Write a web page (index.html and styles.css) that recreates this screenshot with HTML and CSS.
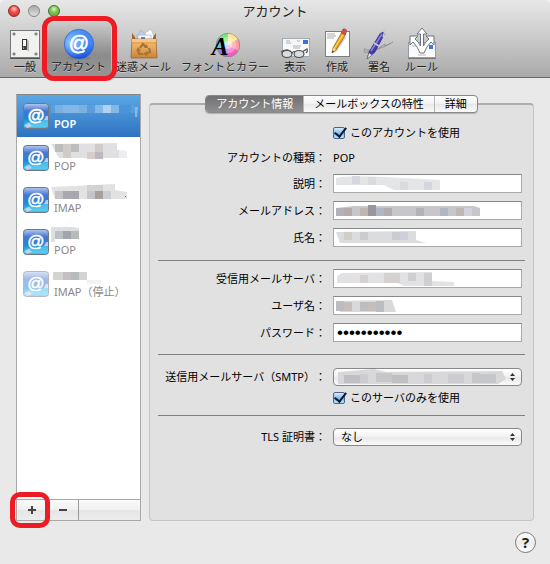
FILE: index.html
```html
<!DOCTYPE html>
<html lang="ja">
<head>
    <meta charset="UTF-8">
    <meta name="viewport" content="width=device-width, initial-scale=1.0">
    <title>アカウント</title>
    <link rel="stylesheet" href="styles.css">
</head>
<body>
    <!-- Shared shapes -->
    <svg class="defs" width="0" height="0" aria-hidden="true">
        <defs>
            <linearGradient id="blueBall" x1="0" y1="0" x2="0" y2="1">
                <stop offset="0" stop-color="#4a8bee"/>
                <stop offset="0.5" stop-color="#3f86f8"/>
                <stop offset="1" stop-color="#1b4fd8"/>
            </linearGradient>
            <radialGradient id="ballLight" cx="0.25" cy="0.45" r="0.6">
                <stop offset="0" stop-color="#9fd2ff"/>
                <stop offset="1" stop-color="#5da4ff" stop-opacity="0"/>
            </radialGradient>
            <linearGradient id="mailTile" x1="0" y1="0" x2="0" y2="1">
                <stop offset="0" stop-color="#b4caf0"/>
                <stop offset="0.3" stop-color="#4577d0"/>
                <stop offset="0.6" stop-color="#2386d4"/>
                <stop offset="1" stop-color="#3ccbf0"/>
            </linearGradient>
            <linearGradient id="bag" x1="0" y1="0" x2="0" y2="1">
                <stop offset="0" stop-color="#d58b3c"/>
                <stop offset="0.3" stop-color="#eeb469"/>
                <stop offset="1" stop-color="#c98237"/>
            </linearGradient>
            <linearGradient id="paper" x1="0" y1="0" x2="0" y2="1">
                <stop offset="0" stop-color="#f2f4f6"/>
                <stop offset="1" stop-color="#ffffff"/>
            </linearGradient>
            <symbol id="mail" viewBox="0 0 26 26">
                <rect x="0.5" y="0.5" width="25" height="25" rx="3" fill="url(#mailTile)" stroke="#6f7780"/>
                <path d="M1 22 Q7 16 12 21 Q18 19 25 14 V24 H1Z" fill="#6fdcf5" opacity="0.5"/>
                <path d="M21 17 L23 13 L25 13 L25 17Z M2 22 L6 20 L9 23 L4 25Z" fill="#dcd3f2" opacity="0.8"/>
                <text x="13" y="18" text-anchor="middle" font-family="Liberation Sans, sans-serif" font-size="17" fill="#fff" stroke="#fff" stroke-width="0.5">@</text>
            </symbol>
            <symbol id="arrows" viewBox="0 0 5 8">
                <path d="M0 3 L2.5 0 L5 3Z M0 5 L2.5 8 L5 5Z" fill="#333"/>
            </symbol>
        </defs>
    </svg>

    <div class="window">
        <header class="header">
            <div class="titlebar">
                <div class="lights">
                    <button class="light red" aria-label="閉じる"></button>
                    <button class="light gray" aria-label="しまう"></button>
                    <button class="light green" aria-label="拡大"></button>
                </div>
                <h1>アカウント</h1>
            </div>
            <nav class="toolbar">
                <button class="tool">
                    <svg viewBox="0 0 32 32">
                        <rect x="1.5" y="2.5" width="29" height="27" fill="#f1f1ef" stroke="#777"/>
                        <path d="M1 30.5H31" stroke="#555"/>
                        <g fill="#9a9a9a" stroke="#666" stroke-width="0.5"><circle cx="5" cy="6" r="1.3"/><circle cx="27" cy="6" r="1.3"/><circle cx="5" cy="26" r="1.3"/><circle cx="27" cy="26" r="1.3"/></g>
                        <path d="M17 21 L20 24 L20 13 L18 11Z" fill="#bbb"/>
                        <rect x="13.5" y="11.5" width="4" height="10" fill="#ddd" stroke="#333"/>
                        <path d="M14 12H17V18H14Z" fill="#fff"/>
                        <path d="M14 18H18V22H15Z" fill="#444"/>
                    </svg>
                    <span>一般</span>
                </button>
                <button class="tool selected">
                    <svg viewBox="0 0 32 32">
                        <ellipse cx="16" cy="30" rx="12" ry="2" fill="#777" opacity="0.5"/>
                        <circle cx="16" cy="16" r="14.7" fill="url(#blueBall)" stroke="#2b5cc4" stroke-width="0.6"/>
                        <circle cx="16" cy="16" r="14" fill="url(#ballLight)"/>
                        <text x="16" y="22" text-anchor="middle" font-family="Liberation Sans, sans-serif" font-size="20" fill="#fff" stroke="#fff" stroke-width="0.6">@</text>
                    </svg>
                    <span>アカウント</span>
                    <i class="marker" aria-hidden="true"></i>
                </button>
                <button class="tool">
                    <svg viewBox="0 0 32 32">
                        <path d="M7 11 L13 2 L21 10Z" fill="#bccff0" stroke="#8fa5cc" stroke-width="0.5"/>
                        <path d="M17 5 L23 1 L27 11 L18 12Z" fill="#fff" stroke="#aaa" stroke-width="0.6"/>
                        <rect x="10" y="7" width="13" height="8" fill="#f5f7fb" stroke="#9aa" stroke-width="0.6"/>
                        <rect x="13" y="9" width="4" height="3" fill="#6687c8"/>
                        <path d="M4 5 L7 9 V12 H4Z M28 5 L25 9 V12 H28Z" fill="#a86724"/>
                        <path d="M4 11 H28 L29 30 H3Z" fill="url(#bag)" stroke="#996024" stroke-width="0.7"/>
                        <path d="M4 11 H28 V14 H4Z" fill="#f4c681"/>
                        <g fill="none" stroke="#a77434" stroke-width="2.2"><path d="M12 20 L15 16 L18 19"/><path d="M21 20 L22 24 L18 26"/><path d="M15 26 H11 L10 22"/></g>
                        <path d="M16 20 L20 20 L19 16Z M19 23 V28 L15 26Z M8 23 L10 19 L13 23Z" fill="#a77434"/>
                    </svg>
                    <span>迷惑メール</span>
                </button>
                <button class="tool">
                    <svg viewBox="0 0 32 32">
                        <path d="M19 17 L19 5 A12 12 0 0 1 29.4 11Z" fill="#fbe79a"/>
                        <path d="M19 17 L29.4 11 A12 12 0 0 1 29.4 23Z" fill="#ff9ea0"/>
                        <path d="M19 17 L29.4 23 A12 12 0 0 1 19 29Z" fill="#f45fc4"/>
                        <path d="M19 17 L19 29 A12 12 0 0 1 8.6 23Z" fill="#9277f4"/>
                        <path d="M19 17 L8.6 23 A12 12 0 0 1 8.6 11Z" fill="#55c3ee"/>
                        <path d="M19 17 L8.6 11 A12 12 0 0 1 19 5Z" fill="#75e87d"/>
                        <circle cx="19" cy="17" r="8" fill="#fff" opacity="0.3"/>
                        <circle cx="19" cy="17" r="4" fill="#fff" opacity="0.5"/>
                        <circle cx="19" cy="17" r="11.7" fill="none" stroke="#777" stroke-width="0.6"/>
                        <text x="11" y="27" text-anchor="middle" font-family="Liberation Serif, serif" font-style="italic" font-weight="bold" font-size="25" fill="#000">A</text>
                    </svg>
                    <span>フォントとカラー</span>
                </button>
                <button class="tool">
                    <svg viewBox="0 0 32 32">
                        <rect x="3.5" y="10.5" width="27" height="18" fill="url(#paper)" stroke="#a4acb2"/>
                        <rect x="24" y="12" width="5" height="4" fill="#3a6fe0"/>
                        <path d="M7 13H11 M7 15H12 M18 13H21 M14 18H22 M14 20H21" stroke="#b0b0b0"/>
                        <path d="M2 24 Q9 19 13 25 Q15 22 17 25 M23 24 L28 21 Q29 24 27 25" fill="none" stroke="#555" stroke-width="1.2"/>
                        <g fill="#d9dddf" stroke="#4c4c4c" stroke-width="1.2"><ellipse cx="8" cy="26" rx="5" ry="3.5"/><ellipse cx="20" cy="26" rx="5" ry="3.5"/></g>
                    </svg>
                    <span>表示</span>
                </button>
                <button class="tool">
                    <svg viewBox="0 0 32 32">
                        <rect x="4.5" y="3.5" width="24" height="25" fill="#fff" stroke="#7d7d7d"/>
                        <path d="M6 6H14 M6 8H15 M6 10H13" stroke="#aaa"/>
                        <path d="M11 25 L15 24 L26 8 L23 10Z" fill="#999" opacity="0.5"/>
                        <path d="M11 25 L12 20 L21 4 L25 6 L15 22Z" fill="#f5ad1e" stroke="#815615" stroke-width="0.7"/>
                        <path d="M13 21 L23 5" stroke="#ffda6b"/>
                        <path d="M20 5 L22 1 Q25 0 26 3 L24 7Z" fill="#d84a43" stroke="#8d5556" stroke-width="0.6"/>
                        <path d="M11 25 L12 20 L15 22Z" fill="#ead4ad"/><path d="M11 25 L11.5 22.5 L13 23.5Z" fill="#222"/>
                    </svg>
                    <span>作成</span>
                </button>
                <button class="tool">
                    <svg viewBox="0 0 32 32">
                        <path d="M2 20 Q-1 26 5 24 Q16 18 12 19 Q6 22 10 24 L22 16 Q20 20 30 14 M2 22 Q16 23 28 15" fill="none" stroke="#888" stroke-width="0.8"/>
                        <path d="M4 31 L6 24 L18 4 L22 5 L12 24Z" fill="#403bb0" stroke="#252567" stroke-width="0.6"/>
                        <path d="M8 23 L19 6" stroke="#8a87e8" stroke-width="1.5"/>
                        <path d="M11 15 L16 18 M17 5 L20 2 L22 3 L20 9" fill="none" stroke="#c9c9d4" stroke-width="1.5"/>
                        <path d="M4 31 L6 25 L9 27Z" fill="#e5e5ea" stroke="#666" stroke-width="0.5"/>
                    </svg>
                    <span>署名</span>
                </button>
                <button class="tool">
                    <svg viewBox="0 0 32 32">
                        <rect x="2.5" y="14.5" width="27" height="15" fill="url(#paper)" stroke="#8f9ba5"/>
                        <path d="M2 30.5H30" stroke="#777"/>
                        <rect x="23" y="17" width="4" height="4" fill="#3a78ec"/>
                        <path d="M6 18H10 M12 27H20" stroke="#bbb"/>
                        <path d="M14 25 Q12 19 7 14 L4 17 V8 H12 L9 11 Q13 14 14.500 18 V6 H11 L16 0 L21 6 H17.500 V18 Q19 14 23 11 L20 8 H28 V17 L25 14 Q20 19 18 25Z" fill="#fff" stroke="#69757e"/>
                    </svg>
                    <span>ルール</span>
                </button>
            </nav>
        </header>

        <main class="main">
            <aside class="sidebar">
                <ul class="accounts">
                    <li class="account active">
                        <svg class="icon"><use href="#mail"/></svg>
                        <div>
                            <svg class="mosaic" viewBox="0 0 88 18"><path d="M0 6H84V14H0Z" fill="#5b9edb"/><path d="M4 6h8v8h-8z M28 6h8v8h-8z" fill="#7ab0e0"/><path d="M12 6h16v8h-16z M44 6h8v8h-8z M60 6h8v8h-8z" fill="#84b7e5"/><path d="M52 6h8v8h-8z" fill="#afd2f0"/><path d="M68 6h12v8h-12z" fill="#4a94d9"/><path d="M84 8h3l-1 10h-2z" fill="#83b8e8"/></svg>
                            <span>POP</span>
                        </div>
                    </li>
                    <li class="account">
                        <svg class="icon"><use href="#mail"/></svg>
                        <div>
                            <svg class="mosaic" viewBox="0 0 88 18"><path d="M0 3 L66 2 V9 L76 10 V17 H8Z" fill="#e0e0e2"/><path d="M4 3h8v8h-8z M20 3h8v8h-8z" fill="#bdbdbf"/><path d="M12 3h8v8h-8z M12 11h8v6h-8z M44 3h8v8h-8z" fill="#cfcbc9"/><path d="M36 11h8v7h-8z" fill="#d8cccc"/><path d="M44 11h8v7h-8z" fill="#bbb9bd"/><path d="M68 10h8v7h-8z" fill="#edeef0"/></svg>
                            <span>POP</span>
                        </div>
                    </li>
                    <li class="account">
                        <svg class="icon"><use href="#mail"/></svg>
                        <div>
                            <svg class="mosaic" viewBox="0 0 88 18"><path d="M0 4 L64 1 V7 L76 9 V16 H4Z" fill="#e3e2e3"/><path d="M12 8h16v8h-16z" fill="#a9a8ae"/><path d="M4 8h8v8h-8z M36 8h8v8h-8z" fill="#c4c4c9"/><path d="M44 8h8v8h-8z" fill="#a89f9c"/><path d="M52 8h8v8h-8z" fill="#cbcfd3"/><path d="M36 2h16v6h-16z" fill="#d5d1d2"/><path d="M74 13h1v1h-1z" fill="#667"/></svg>
                            <span>IMAP</span>
                        </div>
                    </li>
                    <li class="account">
                        <svg class="icon"><use href="#mail"/></svg>
                        <div>
                            <svg class="mosaic" viewBox="0 0 88 18"><path d="M0 2H22L28 3V14H4V17H0Z" fill="#dedfe0"/><path d="M4 6h8v8h-8z" fill="#b9c0c7"/><path d="M12 6h8v8h-8z" fill="#9ea5ad"/><path d="M20 6h8v8h-8z" fill="#b6babd"/></svg>
                            <span>POP</span>
                        </div>
                    </li>
                    <li class="account stopped">
                        <svg class="icon"><use href="#mail"/></svg>
                        <div>
                            <svg class="mosaic" viewBox="0 0 88 18"><path d="M2 5h34v8h-34z" fill="#d4d4d5"/><path d="M12 5h8v8h-8z" fill="#c4bfc0"/><path d="M20 5h8v8h-8z" fill="#b9babd"/><path d="M36 13h14v4h-14z" fill="#f3f3f4"/></svg>
                            <span>IMAP（停止）</span>
                        </div>
                    </li>
                </ul>
                <div class="actions">
                    <button aria-label="追加"><svg viewBox="0 0 9 9"><path d="M3 0h2v3h3v2H5v3H3V5H0V3h3z" fill="#444"/></svg><i class="marker" aria-hidden="true"></i></button>
                    <button aria-label="削除"><svg viewBox="0 0 9 9"><path d="M0 3h8v2H0z" fill="#444"/></svg></button>
                </div>
            </aside>

            <section class="detail">
                <div class="tabs" role="tablist">
                    <button class="tab current" role="tab" aria-selected="true">アカウント情報</button>
                    <button class="tab" role="tab">メールボックスの特性</button>
                    <button class="tab" role="tab">詳細</button>
                </div>
                <form class="panel">
                    <div class="group">
                        <label class="check"><input type="checkbox" checked>このアカウントを使用</label>
                        <div class="row type"><span class="name">アカウントの種類：</span><span>POP</span></div>
                        <div class="row">
                            <label class="name" for="desc">説明：</label>
                            <div class="field"><input id="desc" type="text"><svg class="mosaic" viewBox="0 0 160 16"><path d="M2 3 Q12 0 50 2 L106 5 V15 H60 L50 10 H2Z" fill="#e4e5e7"/><path d="M18 1h8v8h-8z M90 7h8v8h-8z" fill="#d5d6e0"/><path d="M34 2h8v8h-8z M66 7h8v8h-8z" fill="#dadbdd"/></svg></div>
                        </div>
                        <div class="row">
                            <label class="name" for="mail-address">メールアドレス：</label>
                            <div class="field"><input id="mail-address" type="text"><svg class="mosaic" viewBox="0 0 160 16"><path d="M2 6 L20 4 H140 L146 6 V14 H2Z" fill="#c7c6ca"/><path d="M2 6h8v8h-8z M82 6h8v8h-8z" fill="#b3b2ba"/><path d="M10 6h8v8h-8z M50 6h8v8h-8z" fill="#b5aaad"/><path d="M26 6h8v8h-8z" fill="#beb7ad"/><path d="M34 3h8v11h-8z" fill="#98979f"/><path d="M42 6h8v8h-8z M106 6h8v8h-8z" fill="#b2b5c4"/><path d="M122 6h8v8h-8z" fill="#bfb7b3"/><path d="M130 6h8v8h-8z" fill="#d3d1dc"/></svg></div>
                        </div>
                        <div class="row">
                            <label class="name" for="full-name">氏名：</label>
                            <div class="field"><input id="full-name" type="text"><svg class="mosaic" viewBox="0 0 160 16"><path d="M2 3 L82 2 V11 L92 14 H6Z" fill="#dbdcde"/><path d="M10 3h8v8h-8z" fill="#d1cec9"/><path d="M26 3h8v8h-8z M58 3h8v8h-8z" fill="#cbccd0"/><path d="M66 3h8v8h-8z" fill="#cfcfdc"/></svg></div>
                        </div>
                    </div>
                    <div class="group">
                        <div class="row">
                            <label class="name" for="server">受信用メールサーバ：</label>
                            <div class="field"><input id="server" type="text"><svg class="mosaic" viewBox="0 0 160 16"><path d="M3 6 L8 3 L98 2 V11 L120 12 V16 H70 L64 13 H3Z" fill="#e2e1e3"/><path d="M26 5h8v8h-8z M50 3h16v10h-16z" fill="#d5d1d1"/><path d="M74 3h8v8h-8z M90 3h8v13h-8z" fill="#cfced3"/></svg></div>
                        </div>
                        <div class="row">
                            <label class="name" for="user">ユーザ名：</label>
                            <div class="field"><input id="user" type="text"><svg class="mosaic" viewBox="0 0 160 16"><path d="M2 4 L58 3 L62 15 H6Z" fill="#d7d9db"/><path d="M2 4h8v10h-8z M26 5h8v9h-8z M42 4h8v11h-8z" fill="#bdbdc1"/><path d="M10 5h8v9h-8z M34 5h8v9h-8z" fill="#c8bdbe"/></svg></div>
                        </div>
                        <div class="row">
                            <label class="name" for="pass">パスワード：</label>
                            <div class="field"><input id="pass" type="password" value="passwordxyz"></div>
                        </div>
                    </div>
                    <div class="group smtp">
                        <div class="row">
                            <label class="name" for="smtp">送信用メールサーバ（SMTP）：</label>
                            <div class="field"><select id="smtp"><option></option></select><svg class="mosaic" viewBox="0 0 180 16"><path d="M4 3 L40 0 L52 3 L168 2 L172 10 L164 15 H4Z" fill="#d8d8da"/><path d="M10 6h16v8h-16z M58 6h16v8h-16z" fill="#bebec3"/><path d="M26 5h8v9h-8z M90 5h8v9h-8z M114 5h16v9h-16z" fill="#cbcbd0"/><path d="M42 4h16v9h-16z M138 4h8v10h-8z" fill="#c8c6c9"/><path d="M146 5h16v9h-16z" fill="#c6c7cb"/></svg><svg class="arrows"><use href="#arrows"/></svg></div>
                        </div>
                        <label class="check"><input type="checkbox" checked>このサーバのみを使用</label>
                    </div>
                    <div class="group tls">
                        <div class="row">
                            <label class="name" for="tls">TLS 証明書：</label>
                            <div class="field"><select id="tls"><option>なし</option></select><svg class="arrows"><use href="#arrows"/></svg></div>
                        </div>
                    </div>
                </form>
            </section>
        </main>

        <footer class="footer">
            <button class="help">?</button>
        </footer>
    </div>
</body>
</html>
```
FILE: styles.css
```css
/* General Styles */
* {
    box-sizing: border-box;
}

body {
    margin: 0;
    background-color: #f4f4f4;
    font-family: 'Noto Sans', 'Noto Sans CJK JP', sans-serif;
    font-size: 11px;
    line-height: 16px;
    text-spacing-trim: space-all;
    color: #000;
}

button, input, select {
    font: inherit;
    color: inherit;
    margin: 0;
}

button {
    padding: 0;
    border: 0;
    background: none;
}

.defs {
    position: absolute;
}

.window {
    display: flex;
    flex-direction: column;
    min-height: 100vh;
    background-color: #e9e9e9;
    border-radius: 5px 5px 0 0;
    overflow: hidden;
}

/* Title bar and toolbar */
.header {
    height: 78px;
    background: linear-gradient(#e7e7e7, #cacaca 50%, #a9a9a9);
    border-bottom: 1px solid #666;
}

.titlebar {
    display: grid;
    grid-template-columns: 1fr auto 1fr;
    align-items: center;
    height: 22px;
    padding: 0 8px;
}

.titlebar h1 {
    margin: 0;
    font-size: 13px;
    font-weight: normal;
    color: #222;
}

.lights {
    display: flex;
    gap: 8px;
}

.light {
    width: 12px;
    height: 12px;
    border: 1px solid #777;
    border-radius: 50%;
}

.light.red {
    background: radial-gradient(circle at 50% 30%, #ffc9c4, #ee4943 45%, #c9322d);
    border-color: #8e2b28;
}

.light.gray {
    background: linear-gradient(#aaa, #dedede);
    border-color: #858585;
}

.light.green {
    background: radial-gradient(circle at 50% 30%, #d9f7b9, #7cbf4f 45%, #5ba436);
    border-color: #40702a;
}

.toolbar {
    display: flex;
    height: 55px;
    padding-left: 4px;
}

.tool {
    position: relative;
    display: flex;
    flex-direction: column;
    align-items: center;
    min-width: 42px;
    padding: 6px 5px 0;
    white-space: nowrap;
    color: #222;
    text-shadow: 0 1px 0 rgba(255, 255, 255, 0.4);
}

.tool svg {
    width: 32px;
    height: 32px;
    flex: none;
    text-shadow: none;
}

.tool span {
    line-height: 14px;
}

.tool.selected {
    background: linear-gradient(rgba(0, 0, 0, 0.05), rgba(0, 0, 0, 0.26) 60%, rgba(0, 0, 0, 0.12));
}

/* Red frame over a button */
.marker {
    position: absolute;
    inset: -6px -6px -4px -4px;
    z-index: 2;
    border: 5px solid #ed1c24;
    border-radius: 12px;
}

/* Main area */
.main {
    flex: 1;
    display: grid;
    grid-template-columns: 125px 1fr;
    gap: 8px;
    padding: 16px 16px 0;
}

.sidebar {
    display: flex;
    flex-direction: column;
    border: 1px solid #a8a8a8;
    border-top-color: #888;
    background-color: #fff;
}

.accounts {
    flex: 1;
    margin: 0;
    padding: 0;
    list-style: none;
}

.account {
    display: flex;
    gap: 5px;
    height: 42px;
    padding: 8px 0 0 6px;
    color: #888;
}

.account .icon {
    width: 26px;
    height: 26px;
    flex: none;
}

.account div {
    display: flex;
    flex-direction: column;
    margin-top: -4px;
}

.account .mosaic {
    width: 88px;
    height: 18px;
    margin-left: -3px;
}

.account span {
    line-height: 14px;
}

.account.active {
    background: linear-gradient(#5ba8e4, #2e72c2);
    color: #fff;
    font-weight: 600;
}

.account.stopped .icon {
    opacity: 0.5;
}

.actions {
    display: flex;
    height: 21px;
    border-top: 1px solid #a8a8a8;
    background: linear-gradient(#fafafa, #f0f0f0 50%, #e5e5e5 51%, #ededed);
}

.actions button {
    position: relative;
    display: grid;
    place-items: center;
    width: 31px;
    border-right: 1px solid #999;
}

.actions svg {
    width: 9px;
    height: 9px;
}

.actions .marker {
    inset: -8px -3px -8px -7px;
    border-radius: 10px;
}

/* Account detail */
.detail {
    display: flex;
    flex-direction: column;
}

.tabs {
    position: relative;
    z-index: 1;
    display: flex;
    align-self: center;
    height: 18px;
    margin-top: 1px;
    border: 1px solid #888;
    border-radius: 4px;
    background: linear-gradient(#fff, #f1f1f1 50%, #e8e8e8 51%, #fafafa);
    box-shadow: 0 1px 1px rgba(0, 0, 0, 0.2);
}

.tab {
    padding: 0 10px;
    white-space: nowrap;
}

.tab + .tab {
    border-left: 1px solid #b5b5b5;
}

.tab.current {
    background: linear-gradient(#707070, #8f8f8f);
    border-radius: 3px 0 0 3px;
    color: #fff;
}

.panel {
    flex: 1;
    margin-top: -10px;
    padding: 0 8px;
    border: 1px solid #c4c4c4;
    border-top: 2px solid #adadad;
    border-radius: 4px;
    background-color: #e1e1e1;
}

.group {
    display: grid;
    gap: 8px;
    padding: 8px 3px 12px 0;
}

.group:first-child {
    padding-top: 19px;
    padding-bottom: 13px;
}

.group + .group {
    border-top: 1px solid #808080;
}

.group.smtp {
    gap: 4px;
    padding-top: 13px;
    padding-bottom: 9px;
}

.group.tls {
    padding-top: 12px;
}

.row {
    display: grid;
    grid-template-columns: 168px 1fr;
    gap: 7px;
    align-items: center;
}

.name {
    text-align: right;
    white-space: nowrap;
}

.check {
    display: flex;
    align-items: center;
    gap: 5px;
    height: 16px;
    margin-left: 175px;
}

.group:first-child .check {
    height: 18px;
}

.check input {
    appearance: none;
    position: relative;
    width: 12px;
    height: 12px;
    border: 1px solid #50628a;
    border-radius: 2px;
    background: linear-gradient(#d9ecfc, #7db8f2 55%, #b6e2ff);
}

.check input:checked::after {
    content: "";
    position: absolute;
    left: 3px;
    top: -3px;
    width: 5px;
    height: 10px;
    border: solid #0c1a30;
    border-width: 0 2px 2px 0;
    transform: rotate(38deg);
}

.field {
    position: relative;
    display: flex;
}

.field input {
    width: 100%;
    height: 19px;
    padding: 0 3px;
    border: 1px solid #a9a9a9;
    border-top-color: #888;
    background-color: #fff;
}

.field input[type="password"] {
    font-family: 'Liberation Sans', sans-serif;
    font-size: 17px;
}

.field select {
    appearance: none;
    width: 100%;
    height: 18px;
    padding: 0 20px 0 7px;
    border: 1px solid #888;
    border-radius: 4px;
    background: linear-gradient(#fff, #f1f1f1 50%, #e8e8e8 51%, #fafafa);
    line-height: 16px;
}

.field .mosaic {
    position: absolute;
    left: 1px;
    top: 1px;
    height: 16px;
    pointer-events: none;
}

.field .arrows {
    position: absolute;
    right: 7px;
    top: 5px;
    width: 5px;
    height: 8px;
    pointer-events: none;
}

/* Footer */
.footer {
    display: flex;
    justify-content: flex-end;
    height: 43px;
    padding: 11px 14px 0;
}

.help {
    width: 21px;
    height: 21px;
    border: 1px solid #777;
    border-radius: 50%;
    background: linear-gradient(#fff, #ececec 50%, #fff);
    font-size: 15px;
    font-weight: bold;
    line-height: 19px;
    color: #222;
}
```
